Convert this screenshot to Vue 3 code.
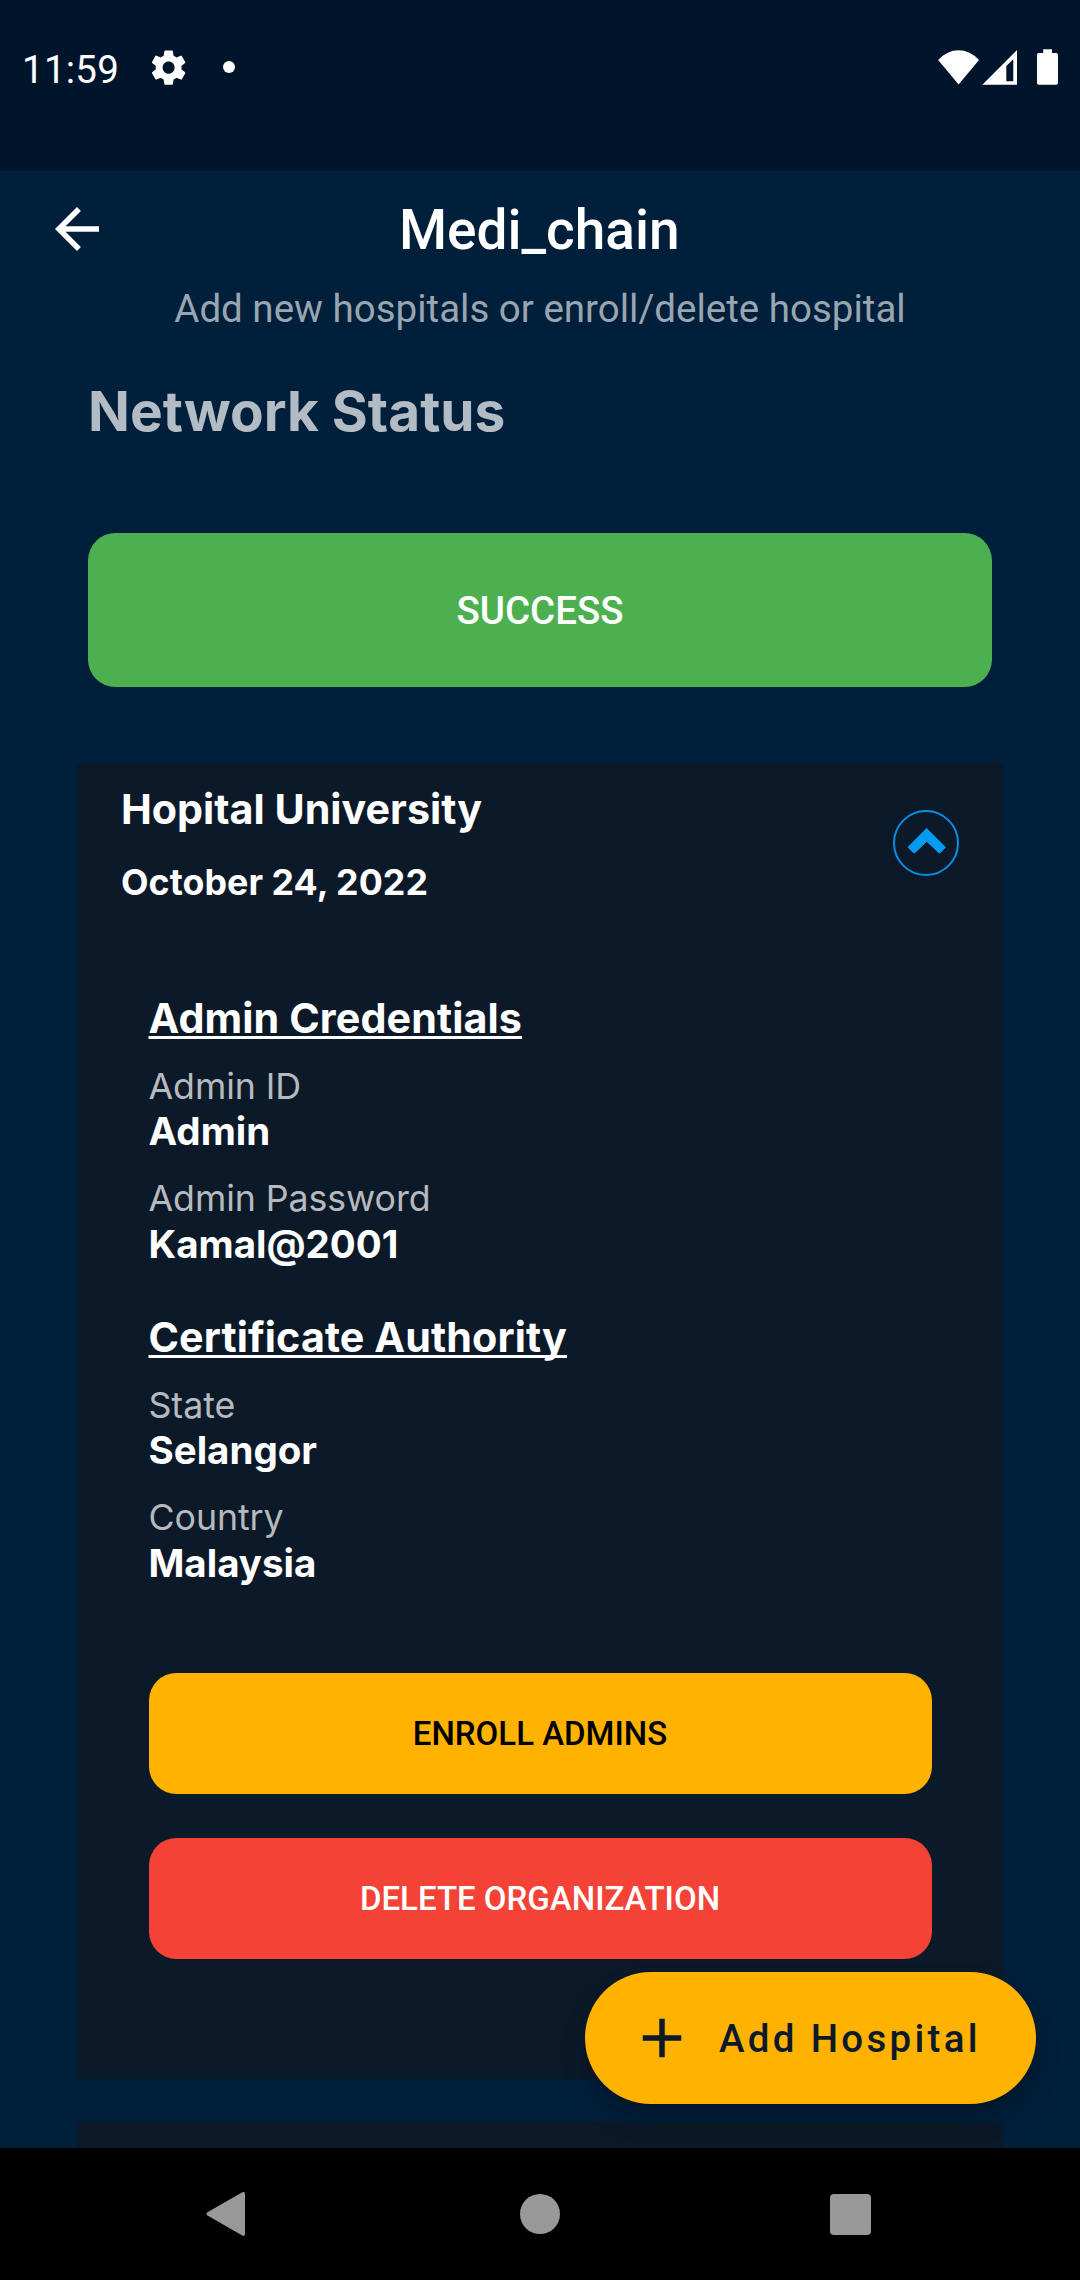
<script setup>
const sections = [
  {
    title: 'Admin Credentials',
    fields: [
      { label: 'Admin ID', value: 'Admin' },
      { label: 'Admin Password', value: 'Kamal@2001' },
    ],
  },
  {
    title: 'Certificate Authority',
    fields: [
      { label: 'State', value: 'Selangor' },
      { label: 'Country', value: 'Malaysia' },
    ],
  },
]
</script>

<template>
  <div class="screen">
    <div class="status-bar">
      <span class="clock">11:59</span>
      <svg class="gear" width="41.25" height="41.25" viewBox="0 0 24 24" fill="#fff">
        <path d="M19.43 12.98c.04-.32.07-.64.07-.98s-.03-.66-.07-.98l2.11-1.65c.19-.15.24-.42.12-.64l-2-3.46c-.12-.22-.39-.3-.61-.22l-2.49 1c-.52-.4-1.08-.73-1.69-.98l-.38-2.65C14.46 2.18 14.25 2 14 2h-4c-.25 0-.46.18-.49.42l-.38 2.65c-.61.25-1.17.59-1.69.98l-2.49-1c-.23-.09-.49 0-.61.22l-2 3.46c-.13.22-.07.49.12.64l2.11 1.65c-.04.32-.07.65-.07.98s.03.66.07.98l-2.11 1.65c-.19.15-.24.42-.12.64l2 3.46c.12.22.39.3.61.22l2.49-1c.52.4 1.08.73 1.69.98l.38 2.65c.03.24.24.42.49.42h4c.25 0 .46-.18.49-.42l.38-2.65c.61-.25 1.17-.59 1.69-.98l2.49 1c.23.09.49 0 .61-.22l2-3.46c.12-.22.07-.49-.12-.64l-2.11-1.65zM12 15.5c-1.93 0-3.5-1.57-3.5-3.5s1.57-3.5 3.5-3.5 3.5 1.57 3.5 3.5-1.57 3.5-3.5 3.5z" />
      </svg>
      <span class="dot"></span>
      <svg class="system" width="122" height="38" viewBox="937 48 122 38" fill="#fff">
        <path d="M958.6 84.4 938.2 59.9Q947.2 50.2 958.6 50.2T979 59.9Z" />
        <path fill-rule="evenodd" d="M982.3 84.7 1017 50V84.7ZM1006.3 66V81.2H1013.3V59.2Z" />
        <path d="M1043.2 49.3h8.8v3.7h4.2q1.8 0 1.8 1.8v28.1q0 1.8-1.8 1.8h-17.4q-1.8 0-1.8-1.8V54.8q0-1.8 1.8-1.8h4.4Z" />
      </svg>
    </div>

    <main class="body">
      <header class="app-bar">
        <svg class="back" width="66" height="66" viewBox="0 0 24 24" fill="#fff">
          <path d="M20 11H7.83l5.59-5.59L12 4l-8 8 8 8 1.41-1.41L7.83 13H20v-2z" />
        </svg>
        <h1>Medi_chain</h1>
      </header>
      <p class="subtitle">Add new hospitals or enroll/delete hospital</p>

      <h2>Network Status</h2>
      <div class="status-button">SUCCESS</div>

      <article class="card">
        <div class="card-head">
          <div>
            <div class="name">Hopital University</div>
            <div class="date">October 24, 2022</div>
          </div>
          <svg class="toggle" width="66" height="66" viewBox="0 0 66 66">
            <circle cx="33" cy="33" r="32" fill="none" stroke="#0590e4" stroke-width="2" />
            <path d="M33.7 18.5 52.4 37.2 47.1 42.8Q46.3 43.2 45.5 42.5L33.7 31.3 22 42.5Q21 43.2 20 42.3L15.1 37.2Z" fill="#039bf4" stroke="#039bf4" stroke-width="1" stroke-linejoin="round" />
          </svg>
        </div>

        <div class="details">
          <section v-for="s in sections" :key="s.title">
            <h3>{{ s.title }}</h3>
            <div v-for="f in s.fields" :key="f.label" class="field">
              <div class="label">{{ f.label }}</div>
              <div class="value">{{ f.value }}</div>
            </div>
          </section>
          <div class="action enroll">ENROLL ADMINS</div>
          <div class="action delete">DELETE ORGANIZATION</div>
        </div>
      </article>

      <article class="card next"></article>

      <div class="fab">
        <svg width="66" height="66" viewBox="0 0 24 24" fill="#0c1929">
          <path d="M19 13h-6v6h-2v-6H5v-2h6V5h2v6h6v2z" />
        </svg>
        <span>Add Hospital</span>
      </div>
    </main>

    <nav class="nav-bar">
      <svg width="40" height="46" viewBox="0 0 40 46" fill="#999">
        <path d="M36.3 1.3Q39 .2 39 3V42.8Q39 45.7 36.3 44.6L1.5 24.6Q-.6 23 1.5 21.2Z" />
      </svg>
      <span class="home"></span>
      <span class="recent"></span>
    </nav>
  </div>
</template>

<style>
body {
  margin: 0;
  background: #000;
}
</style>

<style scoped>
.screen {
  width: 1080px;
  height: 2280px;
  display: flex;
  flex-direction: column;
  overflow: hidden;
  background: #001f3a;
  color: #fff;
  font-family: Roboto, sans-serif;
}

h1, h2, h3, p {
  margin: 0;
}

.status-bar {
  flex: none;
  height: 171px;
  box-sizing: border-box;
  padding: 47px 21px 0 22px;
  display: flex;
  align-items: flex-start;
  background: #00152b;
}

.clock {
  width: 96px;
  font-size: 38.5px;
  line-height: 45px;
  letter-spacing: 0.25px;
}

.gear {
  margin-left: 29.5px;
}

.dot {
  width: 12px;
  height: 12px;
  margin: 14px 0 0 34px;
  border-radius: 50%;
  background: #fff;
}

.system {
  margin: 1px 0 0 auto;
}

.body {
  position: relative;
  height: 1977px;
  overflow: hidden;
}

.app-bar {
  display: flex;
  align-items: center;
  height: 66px;
  padding: 25px 44px 0;
}

.back {
  flex: none;
}

h1 {
  flex: 1;
  padding-right: 67.5px;
  margin-top: 2px;
  text-align: center;
  font-size: 55px;
  line-height: 64px;
  font-weight: 500;
}

.subtitle {
  margin-top: 24px;
  text-align: center;
  font-size: 38.5px;
  line-height: 45px;
  color: #99a5b0;
}

h2 {
  margin: 47px 88px 0;
  font: 700 55px/66px Inter, sans-serif;
  color: #b3bcc4;
}

.status-button {
  margin: 89px 88px 0;
  height: 154px;
  box-sizing: border-box;
  padding-top: 1px;
  display: flex;
  align-items: center;
  justify-content: center;
  border-radius: 27.5px;
  background: #4caf50;
  font-size: 38.5px;
  line-height: 45px;
  font-weight: 500;
}

.card {
  margin: 76px 77px 0;
  height: 1315px;
  background: #0c1929;
  box-shadow: 0 1px 1px rgba(0, 0, 0, 0.12);
  font-family: Inter, sans-serif;
}

.card.next {
  margin-top: 44px;
  height: 200px;
}

.card-head {
  display: flex;
  justify-content: space-between;
  padding: 21px 44px 0;
}

.name {
  font-size: 41.25px;
  line-height: 50px;
  font-weight: 700;
}

.date {
  margin-top: 26px;
  font-size: 35.75px;
  line-height: 44px;
  font-weight: 700;
  letter-spacing: 0.06px;
}

.toggle {
  margin-top: 26px;
}

.details {
  padding: 89px 71.5px 0;
}

section + section {
  margin-top: 45px;
}

h3 {
  font-size: 41.25px;
  line-height: 50px;
  font-weight: 700;
  letter-spacing: 0.1px;
  text-decoration: underline;
  text-decoration-thickness: 3px;
  text-underline-offset: 3px;
  text-decoration-skip-ink: none;
}

.field {
  margin-top: 21px;
}

.field + .field {
  margin-top: 22px;
}

.label {
  font-size: 35.75px;
  line-height: 44px;
  font-weight: 400;
  letter-spacing: -0.08px;
  color: #b6babf;
}

.value {
  font-size: 38.5px;
  line-height: 46px;
  font-weight: 700;
}

.field + .field .value {
  margin-top: 1px;
}

.action {
  height: 121px;
  margin-top: 44px;
  display: flex;
  align-items: center;
  justify-content: center;
  border-radius: 27.5px;
  font: 500 33px/39px Roboto, sans-serif;
}

.enroll {
  margin-top: 87.3px;
  background: #ffb300;
  color: #000;
}

.delete {
  background: #f44336;
}

.fab {
  position: absolute;
  left: 585px;
  top: 1801px;
  width: 451px;
  height: 132px;
  box-sizing: border-box;
  padding-left: 44px;
  display: flex;
  align-items: center;
  gap: 24px;
  border-radius: 66px;
  background: #ffb300;
  color: #0c1929;
  font-size: 38.5px;
  line-height: 46px;
  font-weight: 500;
  letter-spacing: 3.3px;
  white-space: nowrap;
  box-shadow: 0 9px 14px -3px rgba(0, 0, 0, 0.2), 0 16px 28px rgba(0, 0, 0, 0.12);
}

.fab span {
  margin-top: 2px;
}

.nav-bar {
  flex: none;
  height: 132px;
  box-sizing: border-box;
  padding: 0 209px 0 206px;
  display: flex;
  align-items: center;
  justify-content: space-between;
  background: #000;
}

.home {
  width: 40px;
  height: 40px;
  margin: 0 62px 0 66px;
  border-radius: 50%;
  background: #999;
}

.recent {
  width: 41px;
  height: 41px;
  border-radius: 4px;
  background: #999;
}
</style>
